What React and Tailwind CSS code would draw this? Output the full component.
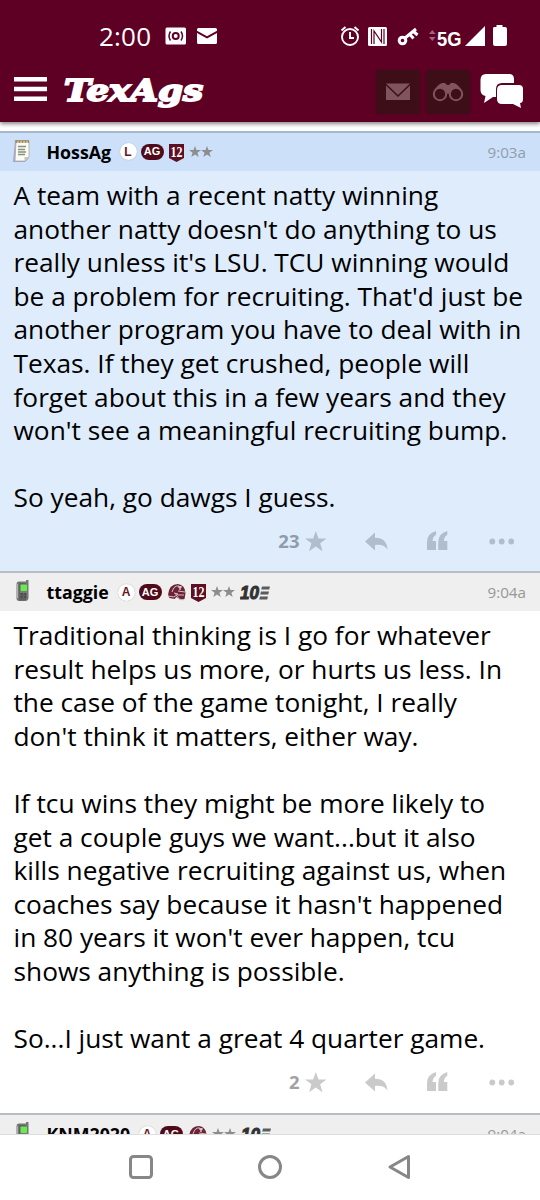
import React from "react";

function StatusBar() {
  return (
    <div className="flex h-[72px] items-end pb-[19px] text-white">
      <div className="ml-[99px] h-[34px] w-[66px] font-['Open_Sans',sans-serif] text-[26px] leading-[34px] whitespace-nowrap tracking-[0.2px]">2:00</div>
      <svg className="h-[34px] w-[375px]" viewBox="165 19 375 34" fill="#fff">
        <rect x="165.500" y="27.500" width="20.500" height="17" rx="1.500" />
        <g fill="none" stroke="#5e0024" strokeWidth="1.500">
          <circle cx="175.700" cy="36" r="3" strokeWidth="2" />
          <path d="M170.500 31.500Q167.500 36 170.500 40.500M181 31.500Q184 36 181 40.500" />
        </g>
        <path d="M198.500 28h17a1.500 1.500 0 0 1 1.500 1.500v1.200l-10 5.600-10-5.600v-1.200a1.500 1.500 0 0 1 1.500-1.500zM197 33l10 5.500 10-5.500v9.500a1.500 1.500 0 0 1-1.500 1.500h-17a1.500 1.500 0 0 1-1.500-1.500z" />
        <g fill="none" stroke="#fff" strokeWidth="1.900">
          <circle cx="350" cy="37" r="8" />
          <path d="M350 32v6h4M341.500 30.500l4-3.500M358.500 30.500l-4-3.500" />
        </g>
        <rect x="368" y="27" width="19" height="19" rx="1.500" />
        <path d="M374 44V31L381.500 42V29M371.500 29v15M384 29v15" fill="none" stroke="#5e0024" strokeWidth="1.200" />
        <circle cx="402.500" cy="40.500" r="3.300" fill="none" stroke="#fff" strokeWidth="3" />
        <path d="M405 38l11-9M410 34.500l3.500 4M413.500 31.500l4 3.500" fill="none" stroke="#fff" strokeWidth="3" />
        <path d="M429 34l3.300-4 3.300 4zM429 37h6.600l-3.300 4z" fill="#a5637b" />
        <text x="437" y="46" fontFamily="Liberation Sans" fontSize="21" fontWeight="700" textLength="24.500" lengthAdjust="spacingAndGlyphs">5G</text>
        <path d="M465 46l20-20v20zM494 27h2.500v-2h6v2h2.500q2 0 2 2v15q0 2-2 2h-10q-2 0-2-2v-15q0-2 1-2z" />
      </svg>
    </div>
  );
}

function AppBar() {
  return (
    <div className="flex h-[50px] items-start">
      <svg className="ml-[13px] h-[40px] w-[210px]" viewBox="13 72 210 40" fill="#fff">
        <path d="M14 77h33v4.500H14zM14 86.700h33v4.500H14zM14 96.500h33v4.500H14z" />
        <text x="64" y="101" fontFamily="DejaVu Serif" fontStyle="italic" fontWeight="700" fontSize="29.500" textLength="139" lengthAdjust="spacingAndGlyphs" stroke="#fff" strokeWidth="1.900">TexAgs</text>
      </svg>
      <div className="ml-[153px] mt-[-2px] flex">
        <div className="flex size-[44px] items-center justify-center rounded-[3px] bg-[#3d0e18] shadow-[0_0_2px_#3d0e18]">
          <svg width="26" height="20" fill="#80545d"><path d="M1 1.500h24L13 13zM1 3.500L13 15 25 3.500V18H1z" /></svg>
        </div>
        <div className="ml-[6px] flex size-[44px] items-center justify-center rounded-[3px] bg-[#3d0e18] shadow-[0_0_2px_#3d0e18]">
          <svg width="32" height="22" fill="none" stroke="#80545d" strokeWidth="2">
            <path d="M2 10Q6 3 10 2h3l2 2h2l2-2h3q4 1 8 8l-6-2-8 5-8-5z" fill="#80545d" stroke="none" />
            <circle cx="8" cy="13" r="6.200" fill="#3d0e18" /><circle cx="24" cy="13" r="6.200" fill="#3d0e18" />
          </svg>
        </div>
        <svg className="ml-[9px] mt-[1px]" width="48" height="42" viewBox="480 71 48 42" fill="#fff">
          <path d="M487 74h23q5 0 5 5v4h-12q-6 0-6 6v8h-3l-9 6 1.500-7q-5-1-5-6V80q0-6 5.500-6z" />
          <path d="M503 85h17q4 0 4 4v10q0 4-3 4l1 5-8-4h-11q-5 0-5-5V90q0-5 5-5z" />
        </svg>
      </div>
    </div>
  );
}

function Note() {
  return (
    <svg width="20" height="24" viewBox="0 0 20 24">
      <path d="M3 1h14v18l-4 4H1z" fill="#a6a6d0" />
      <path d="M4 2h13v16l-4 4H3z" fill="#fbfbf4" stroke="#a6a58f" strokeWidth=".7" />
      <path d="M3.500 2.500h13.500" stroke="#a38b55" strokeWidth="3" strokeDasharray="2 1" />
      <path d="M6 7.500h8M6 10.500h7M6 13h8M6 15.500h7" stroke="#84917e" strokeWidth="1.300" />
      <path d="M12.500 22v-4h4z" fill="#c6c6c0" />
    </svg>
  );
}

function Phone() {
  return (
    <svg width="20" height="24" viewBox="0 0 20 24">
      <path d="M6.500 2.500H14V1h2.500L16.500 19q-.5 3-3 3H7q-2 0-2.500-2L4.500 5q0-2.500 2-2.500z" fill="#777" />
      <path d="M7 4h5.500l2 1v15l-2 1.500H7z" fill="#606060" />
      <path d="M5.500 5v14" stroke="#b0b0b0" strokeWidth="1" />
      <rect x="8.500" y="5.500" width="6.500" height="6.500" rx=".7" fill="#67ec4d" />
      <path d="M9 15h1.500M12.500 15h1.500M9 18h1.500M12.500 18h1.500" stroke="#404040" strokeWidth="1.300" />
      <path d="M8 13h7" stroke="#aaa" strokeWidth=".7" />
    </svg>
  );
}

function Letter({ children }) {
  return <span className="flex size-[17px] shrink-0 items-center justify-center rounded-full bg-white font-['Liberation_Sans',sans-serif] text-[12px] font-bold text-[#681629] shadow-[0_0_1px_#999]">{children}</span>;
}

function AgPill() {
  return <span className="ml-[4px] flex h-[16px] w-[23px] shrink-0 items-center justify-center rounded-full bg-[#500b1b] font-['Liberation_Sans',sans-serif] text-[11px] font-bold text-white">AG</span>;
}

function Shield() {
  return (
    <svg className="ml-[5px] mt-[2px]" width="15" height="18">
      <path d="M0 0h15v14l-7.500 4L0 14z" fill="#5e1022" />
      <text x="1.500" y="12.500" fontFamily="Liberation Serif" fontSize="15" fontWeight="700" fill="#fff" textLength="12" lengthAdjust="spacingAndGlyphs">12</text>
    </svg>
  );
}

function Helmet() {
  return (
    <svg className="ml-[5px]" width="19" height="18">
      <path d="M1 12Q2 1 11 1q7 1 7.500 9l-1 6-4 1-4-3-2 2-5-1z" fill="#6d2336" />
      <path d="M5 9Q7 2 12 3M1 13l6 1 4-3-4-1M8 10l4 6 4 1M11 8l7 1M11 12h6" fill="none" stroke="#d5bdc6" strokeWidth="1" />
      <path d="M13 3v4m-2-3h4" stroke="#eee" strokeWidth="1.200" />
    </svg>
  );
}

function Stars() {
  return (
    <svg className="ml-[5px]" width="24" height="12" fill="#8d8d8d">
      <path d="M6 0l1.450 4.100H12L8.400 6.700 9.700 11 6 8.400 2.300 11l1.300-4.300L0 4.100h4.550z" />
      <path transform="translate(12)" d="M6 0l1.450 4.100H12L8.400 6.700 9.700 11 6 8.400 2.300 11l1.300-4.300L0 4.100h4.550z" />
    </svg>
  );
}

function Ten() {
  return (
    <svg className="ml-[5px] mt-[1px]" width="31" height="16" fill="#333">
      <text x="0" y="14" fontFamily="Liberation Sans" fontSize="17.500" fontWeight="700" fontStyle="italic" textLength="19" lengthAdjust="spacingAndGlyphs" stroke="#333" strokeWidth="1">10</text>
      <path d="M22 1.500h8l-.8 3h-8zM21 6.500h8l-.8 3h-8zM20 11.500h8l-.8 3h-8z" fill="#5c5c5c" />
    </svg>
  );
}

function PostHeader({ name, nameClass, letter, time, icon, helmet, shield, ten, tint }) {
  return (
    <div className={`flex h-[40px] shrink-0 items-center border-t-2 ${tint ? "border-[#a7b8ca] bg-[#cce0fa] pb-[1px]" : "border-[#b7bdc1] bg-[#efefef]"}`}>
      <span className="ml-[12px] w-[34.500px] shrink-0 -translate-y-[1px]">{icon}</span>
      <span className={`shrink-0 whitespace-nowrap font-['Open_Sans',sans-serif] text-[17.800px] font-bold leading-[24px] text-black ${nameClass}`}>{name}</span>
      <Letter>{letter}</Letter>
      <AgPill />
      {helmet && <Helmet />}
      {shield && <Shield />}
      <Stars />
      {ten && <Ten />}
      <span className={`ml-auto mr-[14px] font-['Open_Sans',sans-serif] text-[15.200px] leading-[22px] ${tint ? "text-[#929dab]" : "text-[#979797]"}`}>{time}</span>
    </div>
  );
}

function Lines({ items }) {
  return (
    <div className="ml-[13.500px] font-['Open_Sans',sans-serif] text-[26.270px] leading-[33.600px] text-black">
      {items.map((t, i) => <div key={i} className="h-[33.600px] whitespace-nowrap">{t}</div>)}
    </div>
  );
}

function Actions({ count, tint }) {
  return (
    <div className={`flex h-[30px] items-center ${tint ? "text-[#afbdcc]" : "text-[#cacaca]"}`}>
      <span className={`w-[299.500px] text-right font-['Open_Sans',sans-serif] text-[18.500px] font-bold leading-[26px] ${tint ? "text-[#8e9cab]" : "text-[#a1a1a1]"}`}>{count}</span>
      <svg className="h-[30px] w-[240px]" viewBox="300 526 240 30" fill="currentColor">
        <path d="M315.800 531l2.700 7.500h8l-6.300 4.700 2.300 8-6.700-4.700-6.700 4.700 2.300-8-6.300-4.700h8z" />
        <path d="M365 541.500l10-9v5.300c8 0 12 4.200 12.500 11.700-3-4.300-7-5.200-12.500-4.500v5.500z" />
        <path d="M436 531v4q-3 1-3.500 6h3.500v9h-9v-8q0-8.500 9-11zM447.300 531v4q-3 1-3.500 6h3.500v9h-9v-8q0-8.500 9-11z" />
        <circle cx="492.300" cy="541.500" r="2.900" /><circle cx="501.700" cy="541.500" r="2.900" /><circle cx="511.200" cy="541.500" r="2.900" />
      </svg>
    </div>
  );
}

const first = [
  "A team with a recent natty winning", "another natty doesn't do anything to us", "really unless it's LSU. TCU winning would",
  "be a problem for recruiting. That'd just be", "another program you have to deal with in", "Texas. If they get crushed, people will",
  "forget about this in a few years and they", "won't see a meaningful recruiting bump.", "", "So yeah, go dawgs I guess.",
];
const second = [
  "Traditional thinking is I go for whatever", "result helps us more, or hurts us less. In", "the case of the game tonight, I really",
  "don't think it matters, either way.", "", "If tcu wins they might be more likely to", "get a couple guys we want...but it also",
  "kills negative recruiting against us, when", "coaches say because it hasn't happened", "in 80 years it won't ever happen, tcu",
  "shows anything is possible.", "", "So...I just want a great 4 quarter game.",
];

export default function App() {
  return (
    <div className="flex h-[1200px] w-[540px] flex-col overflow-hidden bg-white">
      <header className="relative z-10 h-[122px] shrink-0 bg-[#5e0024] shadow-[0_2px_4px_#888]">
        <StatusBar />
        <AppBar />
      </header>
      <main className="flex h-[1012px] shrink-0 flex-col overflow-hidden pt-[9px]">
        <article className="h-[440px] shrink-0 bg-[#deecfb]">
          <PostHeader name="HossAg" nameClass="w-[73px]" letter="L" time="9:03a" icon={<Note />} shield tint />
          <div className="pt-[8px]"><Lines items={first} /></div>
          <div className="pt-[11px]"><Actions count="23" tint /></div>
        </article>
        <article className="h-[542px] shrink-0">
          <PostHeader name="ttaggie" nameClass="w-[71px]" letter="A" time="9:04a" icon={<Phone />} helmet shield ten />
          <div className="pt-[8px]"><Lines items={second} /></div>
          <div className="pt-[11px]"><Actions count="2" /></div>
        </article>
        <PostHeader name="KNM2020" nameClass="w-[92px]" letter="A" time="9:04a" icon={<Phone />} helmet ten />
      </main>
      <nav className="h-[66px] shrink-0 border-t border-[#dedede] bg-white">
        <svg className="block h-[65px] w-full" viewBox="0 1135 540 65" fill="none" stroke="#878787" strokeWidth="3" strokeLinejoin="round">
          <rect x="130.500" y="1156.500" width="21" height="21" rx="3" />
          <circle cx="270" cy="1167" r="10.500" />
          <path d="M390 1167l18.500-10.500v21z" />
        </svg>
      </nav>
    </div>
  );
}
